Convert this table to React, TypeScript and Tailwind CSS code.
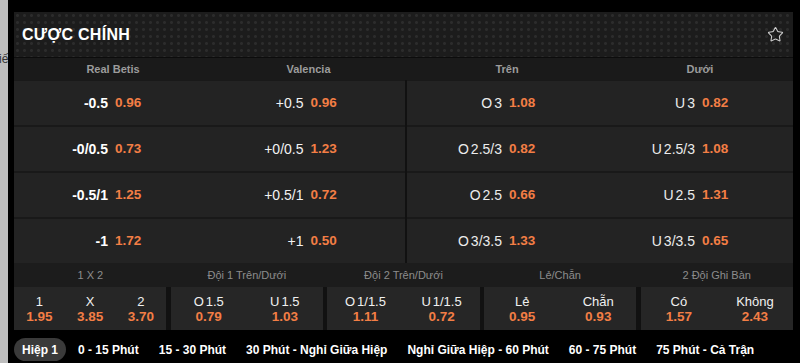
import React from "react";
import { Star } from "lucide-react";

const leftRows = [
  ["-0.5", "0.96", "+0.5", "0.96"],
  ["-0/0.5", "0.73", "+0/0.5", "1.23"],
  ["-0.5/1", "1.25", "+0.5/1", "0.72"],
  ["-1", "1.72", "+1", "0.50"],
];
const rightRows = [
  ["3", "1.08", "3", "0.82"],
  ["2.5/3", "0.82", "2.5/3", "1.08"],
  ["2.5", "0.66", "2.5", "1.31"],
  ["3/3.5", "1.33", "3/3.5", "0.65"],
];

const groups: { title: string; items: [string, string, string][] }[] = [
  { title: "1 X 2", items: [["", "1", "1.95"], ["", "X", "3.85"], ["", "2", "3.70"]] },
  { title: "Đội 1 Trên/Dưới", items: [["O", "1.5", "0.79"], ["U", "1.5", "1.03"]] },
  { title: "Đội 2 Trên/Dưới", items: [["O", "1/1.5", "1.11"], ["U", "1/1.5", "0.72"]] },
  { title: "Lẻ/Chẵn", items: [["", "Lẻ", "0.95"], ["", "Chẵn", "0.93"]] },
  { title: "2 Đội Ghi Bàn", items: [["", "Có", "1.57"], ["", "Không", "2.43"]] },
];

const tabs = [
  "0 - 15 Phút",
  "15 - 30 Phút",
  "30 Phút - Nghỉ Giữa Hiệp",
  "Nghỉ Giữa Hiệp - 60 Phút",
  "60 - 75 Phút",
  "75 Phút - Cả Trận",
];

function HdpCell({ hdp, odds, bold }: { hdp: string; odds: string; bold: boolean }) {
  return (
    <div className="grid grid-cols-2 items-center">
      <div
        className={
          bold
            ? "text-right pr-[5px] text-[14px] font-bold text-white"
            : "text-right pr-[5px] text-[14px] text-[#f2f2f2]"
        }
      >
        {hdp}
      </div>
      <div className="pl-[2px] text-[13.5px] font-bold text-[#f37e45]">{odds}</div>
    </div>
  );
}

function OuCell({ p, line, odds }: { p: string; line: string; odds: string }) {
  return (
    <div className="grid grid-cols-2 items-center">
      <div className="text-right pr-[5px] text-[14px] text-[#ececec]">
        <span>{p}</span>
        <span className="ml-[2px]">{line}</span>
      </div>
      <div className="pl-[2px] text-[13.5px] font-bold text-[#f37e45]">{odds}</div>
    </div>
  );
}

export default function App() {
  return (
    <div className="w-[800px] h-[363px] bg-black flex overflow-hidden font-['Liberation_Sans',Arial,sans-serif]">
      <div className="w-[8px] shrink-0 bg-[#bdbdbd] overflow-hidden pt-[50px]">
        <div className="text-[12px] text-[#333] whitespace-nowrap -ml-[1px]">iế</div>
      </div>
      <div className="w-[6px] shrink-0 bg-black" />
      <div className="w-[779px] shrink-0 flex flex-col pt-[12px]">
        <div className="h-[45px] flex items-center justify-between pl-[8px] pr-[9px] bg-[#1c1c1c] bg-[radial-gradient(circle,#2c2c2c_1.2px,transparent_1.7px)] bg-size-[7px_7px]">
          <div className="text-[16px] font-bold text-white tracking-[0.3px]">CƯỢC CHÍNH</div>
          <Star size={17} strokeWidth={1.5} className="text-[#cfcfcf]" />
        </div>
        <div className="h-[1px] bg-[#0c0c0c]" />
        <div className="h-[22px] bg-[#1a1a1a] grid grid-cols-[198px_193px_2px_200px_186px] items-center text-[11px] font-bold text-[#9c9c9c] text-center">
          <div>Real Betis</div>
          <div>Valencia</div>
          <div />
          <div>Trên</div>
          <div>Dưới</div>
        </div>
        <div className="flex bg-[#191919]">
          <div className="w-[391px] flex flex-col gap-[2px] pt-[1px]">
            {leftRows.map((r, i) => (
              <div key={i} className="h-[44px] bg-[#232323] grid grid-cols-[198px_193px]">
                <HdpCell hdp={r[0]} odds={r[1]} bold />
                <HdpCell hdp={r[2]} odds={r[3]} bold={false} />
              </div>
            ))}
          </div>
          <div className="w-[2px] bg-[#111111]" />
          <div className="w-[386px] flex flex-col gap-[2px] pt-[1px]">
            {rightRows.map((r, i) => (
              <div key={i} className="h-[44px] bg-[#232323] grid grid-cols-[200px_186px]">
                <OuCell p="O" line={r[0]} odds={r[1]} />
                <OuCell p="U" line={r[2]} odds={r[3]} />
              </div>
            ))}
          </div>
        </div>
        <div className="h-[24px] bg-[#1c1c1c] grid grid-cols-5 gap-[4px] items-center text-[11px] text-[#8c8c8c] text-center">
          {groups.map((g) => (
            <div key={g.title}>{g.title}</div>
          ))}
        </div>
        <div className="h-[43px] grid grid-cols-5 gap-[4.5px] bg-[#111111]">
          {groups.map((g) => (
            <div key={g.title} className="bg-[#262626] flex items-center">
              {g.items.map(([p, l, o]) => (
                <div key={p + l} className="flex-1 flex flex-col items-center leading-[15px]">
                  <div className="text-[13px] text-[#f0f0f0]">
                    {p ? <span className="mr-[2px]">{p}</span> : null}
                    <span>{l}</span>
                  </div>
                  <div className="text-[13.5px] font-bold text-[#f37e45]">{o}</div>
                </div>
              ))}
            </div>
          ))}
        </div>
        <div className="flex items-center gap-[4px] pt-[8px]">
          <div className="h-[23px] px-[8px] rounded-full bg-[#3a3a3a] flex items-center text-[12px] font-bold text-white">
            Hiệp 1
          </div>
          {tabs.map((t) => (
            <div key={t} className="px-[8px] text-[12px] font-bold text-white whitespace-nowrap">
              {t}
            </div>
          ))}
        </div>
      </div>
      <div className="w-[7px] shrink-0 bg-black" />
    </div>
  );
}
